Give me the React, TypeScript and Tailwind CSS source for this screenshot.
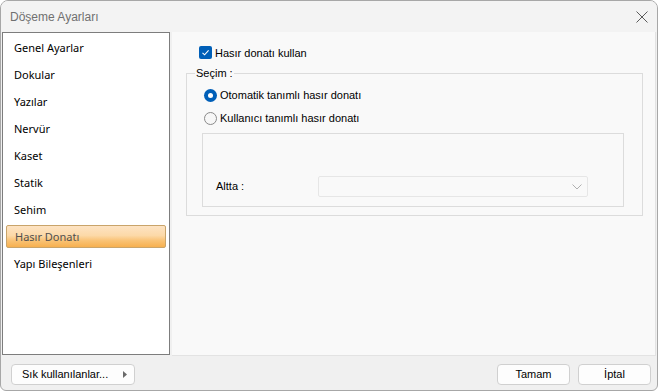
import React from "react";

const items = [
  "Genel Ayarlar",
  "Dokular",
  "Yazılar",
  "Nervür",
  "Kaset",
  "Statik",
  "Sehim",
  "Hasır Donatı",
  "Yapı Bileşenleri",
];

export default function App() {
  const sel = "Hasır Donatı";
  return (
    <div
      className="w-[658px] h-[391px] bg-[#f0f0f0] border border-[#a7a7a7] rounded-t-[8px] rounded-b-[6px] overflow-hidden flex flex-col text-black"
      style={{ fontFamily: '"Liberation Sans", Arial, sans-serif' }}
    >
      {/* title bar */}
      <div className="h-[31px] flex items-center justify-between pl-[9px] pr-[8px] bg-[#f3f3f3]">
        <span className="text-[12px] text-[#707070]">Döşeme Ayarları</span>
        <svg width="12" height="12" viewBox="0 0 12 12" className="mr-[1px]">
          <path d="M0.5 0.5 L11.5 11.5 M11.5 0.5 L0.5 11.5" stroke="#5a5a5a" strokeWidth="1" fill="none" />
        </svg>
      </div>

      {/* body */}
      <div className="h-[325px] flex gap-[2px] pl-[1px]">
        <div className="w-[168px] h-[323px] bg-white border border-[#7d7d7d] pt-[1px]">
          {items.map((it) => (
            <div key={it} className="h-[27px] py-[2px] pl-[3px] pr-[3px]">
              <div
                className={
                  "h-[23px] flex items-center pt-[1px] pl-[8px] text-[11px] " +
                  (it === sel
                    ? "border border-[#c9a46a] rounded-[2px] bg-[linear-gradient(to_bottom,#fde3c3_0%,#fcd9a8_45%,#f9c274_70%,#f7b04f_100%)] text-[#505050] pl-[7px]"
                    : "text-black")
                }
                style={{ fontFamily: '"Noto Sans", sans-serif' }}
              >
                {it}
              </div>
            </div>
          ))}
        </div>

        <div className="w-[484px] h-[324px] bg-[#f9f9f9] border-r border-b border-[#e3e3e3] pt-[14px] pl-[14px] pr-[12px] text-[11px]">
          {/* checkbox */}
          <div className="flex items-center h-[13px] pl-[13px] gap-[3px]">
            <span className="w-[13px] h-[13px] rounded-[2px] bg-[#005fb8] flex items-center justify-center">
              <svg width="9" height="9" viewBox="0 0 9 9">
                <path d="M1.5 4.8 L3.6 6.8 L7.6 2.4" stroke="#ffffff" strokeWidth="1.1" fill="none" />
              </svg>
            </span>
            <span className="pt-[1px]">Hasır donatı kullan</span>
          </div>

          {/* group box */}
          <div className="relative mt-[14px] h-[143px] border border-[#dcdcdc] pt-[15px] pl-[17px] pr-[18px]">
            <span className="absolute left-[8px] top-[-8px] bg-[#f9f9f9] px-[1px] leading-[14px]">Seçim :</span>
            <div className="flex items-center h-[13px] gap-[3px]">
              <span className="w-[13px] h-[13px] rounded-full bg-[#005fb8] flex items-center justify-center">
                <span className="w-[5px] h-[5px] rounded-full bg-white" />
              </span>
              <span>Otomatik tanımlı hasır donatı</span>
            </div>
            <div className="flex items-center h-[13px] gap-[3px] mt-[10px]">
              <span className="w-[13px] h-[13px] rounded-full border border-[#8a8a8a] bg-[#f7f7f7]" />
              <span>Kullanıcı tanımlı hasır donatı</span>
            </div>
            <div className="mt-[8px] ml-[-2px] w-[422px] h-[74px] border border-[#dcdcdc] flex items-end pb-[9px] pl-[13px]">
              <div className="flex items-center w-full">
                <span className="w-[102px]">Altta :</span>
                <div className="w-[270px] h-[21px] border border-[#e6e6e6] rounded-[2px] bg-[#f9f9f9] flex items-center justify-end pr-[5px]">
                  <svg width="10" height="6" viewBox="0 0 10 6">
                    <path d="M0.5 0.5 L5 5 L9.5 0.5" stroke="#b0b0b0" strokeWidth="1" fill="none" />
                  </svg>
                </div>
              </div>
            </div>
          </div>
        </div>
      </div>

      {/* bottom bar */}
      <div className="flex-1 flex items-start pt-[7px] pl-[10px] pr-[6px] text-[11px]">
        <div className="w-[124px] h-[21px] bg-[#fdfdfd] border border-[#d0d0d0] rounded-[4px] flex items-center justify-between pl-[10px] pr-[7px]">
          <span>Sık kullanılanlar...</span>
          <svg width="4" height="7" viewBox="0 0 4 7">
            <path d="M0 0 L4 3.5 L0 7 Z" fill="#6a6a6a" />
          </svg>
        </div>
        <div className="flex-1" />
        <div className="w-[73px] h-[21px] bg-[#fdfdfd] border border-[#d0d0d0] rounded-[4px] flex items-center justify-center">
          Tamam
        </div>
        <div className="w-[73px] h-[21px] ml-[8px] bg-[#fdfdfd] border border-[#d0d0d0] rounded-[4px] flex items-center justify-center">
          İptal
        </div>
      </div>
    </div>
  );
}
